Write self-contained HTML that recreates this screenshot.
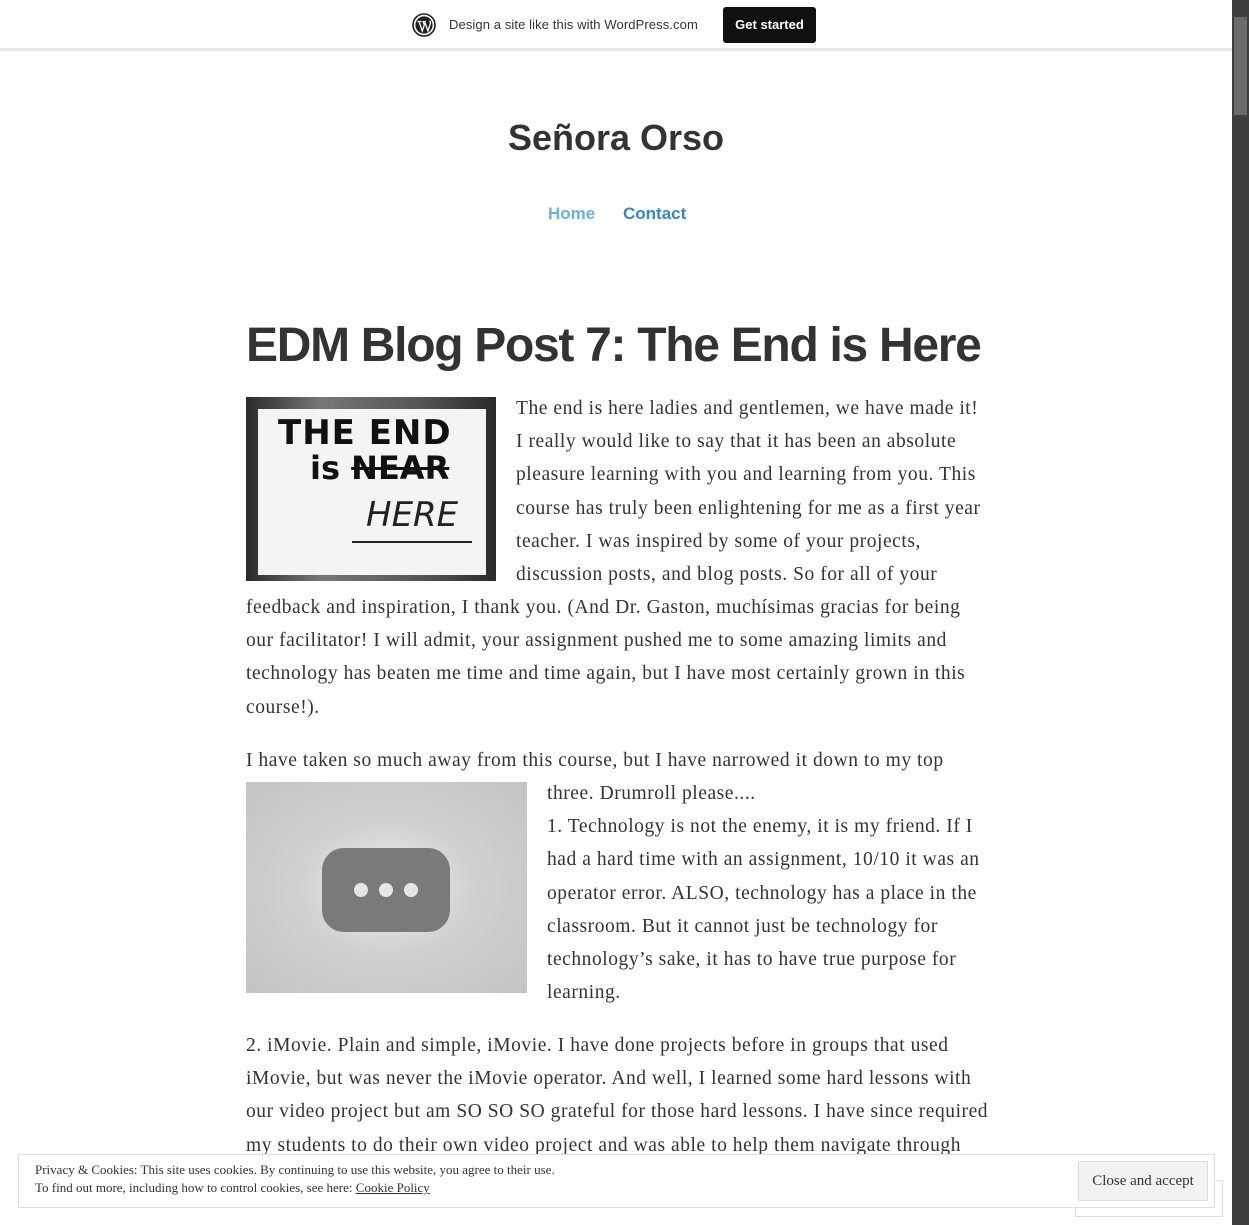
<!DOCTYPE html>
<html><head><meta charset="utf-8"><style>
html,body{margin:0;padding:0}
body{width:1249px;height:1225px;overflow:hidden;position:relative;background:#fff;color:#333;font-family:"Liberation Serif",serif}
.bar{position:absolute;left:0;top:0;width:1232px;height:48px;background:#fff;border-bottom:3px solid #e8e8e8}
.bar .t{position:absolute;left:449px;top:17px;font:13px "Liberation Sans",sans-serif;color:#333;letter-spacing:0.1px}
.bar .b{position:absolute;left:723px;top:7px;width:93px;height:36px;background:#101010;border-radius:3px;color:#fff;font:bold 13px "Liberation Sans",sans-serif;text-align:center;line-height:36px}
.sb{position:absolute;left:1232px;top:0;width:17px;height:1225px;background:#3e3e3e}
.sb .th{position:absolute;left:2px;top:17px;width:13px;height:98px;background:#6b6b6b}
h1.site{position:absolute;left:0;width:1232px;top:117px;margin:0;text-align:center;font:bold 36px "Liberation Sans",sans-serif;color:#333}
.nav{position:absolute;top:204px;font:bold 17px "Liberation Sans",sans-serif}
h2{position:absolute;left:246px;top:318px;margin:0;font:bold 48px "Liberation Sans",sans-serif;color:#333;letter-spacing:-1.3px;white-space:nowrap}
.p{position:absolute;font-size:19.5px;line-height:33.2px;white-space:nowrap;color:#333;letter-spacing:0.55px}
.img1{position:absolute;left:246px;top:397px;width:250px;height:184px;background:linear-gradient(90deg,#2a2a2a,#777 30%,#555 70%,#2a2a2a)}
.paper{position:absolute;left:12px;top:12px;width:228px;height:166px;background:#f4f4f4}
.img2{position:absolute;left:246px;top:782px;width:281px;height:211px;background:radial-gradient(ellipse at center,#f0f0f0 0%,#d0d0d0 45%,#c4c4c4 100%)}
.pill{position:absolute;left:76px;top:66px;width:128px;height:84px;background:#7a7a7a;border-radius:22px}
.dot{position:absolute;top:35px;width:14px;height:14px;border-radius:50%;background:#e6e6e6}
.ck{position:absolute;left:18px;top:1154px;width:1195px;height:52px;background:#fff;border:1px solid #ddd;font-size:13px;line-height:18px;color:#333}
.ck2{position:absolute;left:1075px;top:1180px;width:146px;height:35px;background:#fff;border:1px solid #ddd}
.cb{position:absolute;left:1078px;top:1161px;width:128px;height:38px;background:#f2f2f2;border:1px solid #ddd;border-radius:2px;font-size:15px;text-align:center;line-height:38px;color:#333}
</style></head><body>
<div class="bar">
<svg style="position:absolute;left:412px;top:13px" width="24" height="24" viewBox="0 0 24 24"><circle cx="12" cy="12" r="11" fill="none" stroke="#1e1e1e" stroke-width="1.6"/><circle cx="12" cy="12" r="8.6" fill="#1e1e1e"/><path d="M5.5 8.5h4M7 8.5l3.3 9.5 2-6-1.2-3.5M10.5 8.5h3.5M12.6 8.5l3.3 9.5 2.2-6.5c.6-1.7.4-3-.6-3.5" stroke="#fff" stroke-width="1.3" fill="none"/></svg>
<div class="t">Design a site like this with WordPress.com</div>
<div class="b">Get started</div>
</div>
<div class="sb"><div class="th"></div></div>
<h1 class="site">Señora Orso</h1>
<div class="nav" style="left:548px;color:#6fb0dd">Home</div>
<div class="nav" style="left:623px;color:#3a87c0">Contact</div>
<h2>EDM Blog Post 7: The End is Here</h2>
<div class="img1"><div class="paper">
<div style="position:absolute;left:20px;top:4px;font:bold 34px 'DejaVu Sans',sans-serif;color:#111;letter-spacing:1px">THE END</div>
<div style="position:absolute;left:52px;top:40px;font:bold 32px 'DejaVu Sans',sans-serif;color:#111">is <s>NEAR</s></div>
<div style="position:absolute;left:108px;top:86px;font:italic 34px 'DejaVu Sans',sans-serif;color:#222">HERE</div>
<div style="position:absolute;left:94px;top:132px;width:120px;height:2px;background:#222"></div>
</div></div>
<div class="p" style="left:516px;top:392px">The end is here ladies and gentlemen, we have made it!<br>I really would like to say that it has been an absolute<br>pleasure learning with you and learning from you. This<br>course has truly been enlightening for me as a first year<br>teacher. I was inspired by some of your projects,<br>discussion posts, and blog posts. So for all of your</div>
<div class="p" style="left:246px;top:591px">feedback and inspiration, I thank you. (And Dr. Gaston, muchísimas gracias for being<br>our facilitator! I will admit, your assignment pushed me to some amazing limits and<br>technology has beaten me time and time again, but I have most certainly grown in this<br>course!).</div>
<div class="p" style="left:246px;top:744px">I have taken so much away from this course, but I have narrowed it down to my top</div>
<div class="img2"><div class="pill"><div class="dot" style="left:32px"></div><div class="dot" style="left:57px"></div><div class="dot" style="left:82px"></div></div></div>
<div class="p" style="left:547px;top:777px">three. Drumroll please....<br>1. Technology is not the enemy, it is my friend. If I<br>had a hard time with an assignment, 10/10 it was an<br>operator error. ALSO, technology has a place in the<br>classroom. But it cannot just be technology for<br>technology’s sake, it has to have true purpose for<br>learning.</div>
<div class="p" style="left:246px;top:1029px">2. iMovie. Plain and simple, iMovie. I have done projects before in groups that used<br>iMovie, but was never the iMovie operator. And well, I learned some hard lessons with<br>our video project but am SO SO SO grateful for those hard lessons. I have since required<br>my students to do their own video project and was able to help them navigate through<br>The SAME and this way it... </div>
<div class="ck2"></div>
<div class="ck"><div style="position:absolute;left:16px;top:6px">Privacy &amp; Cookies: This site uses cookies. By continuing to use this website, you agree to their use.<br>To find out more, including how to control cookies, see here: <u>Cookie Policy</u></div></div>
<div class="cb">Close and accept</div>
</body></html>
